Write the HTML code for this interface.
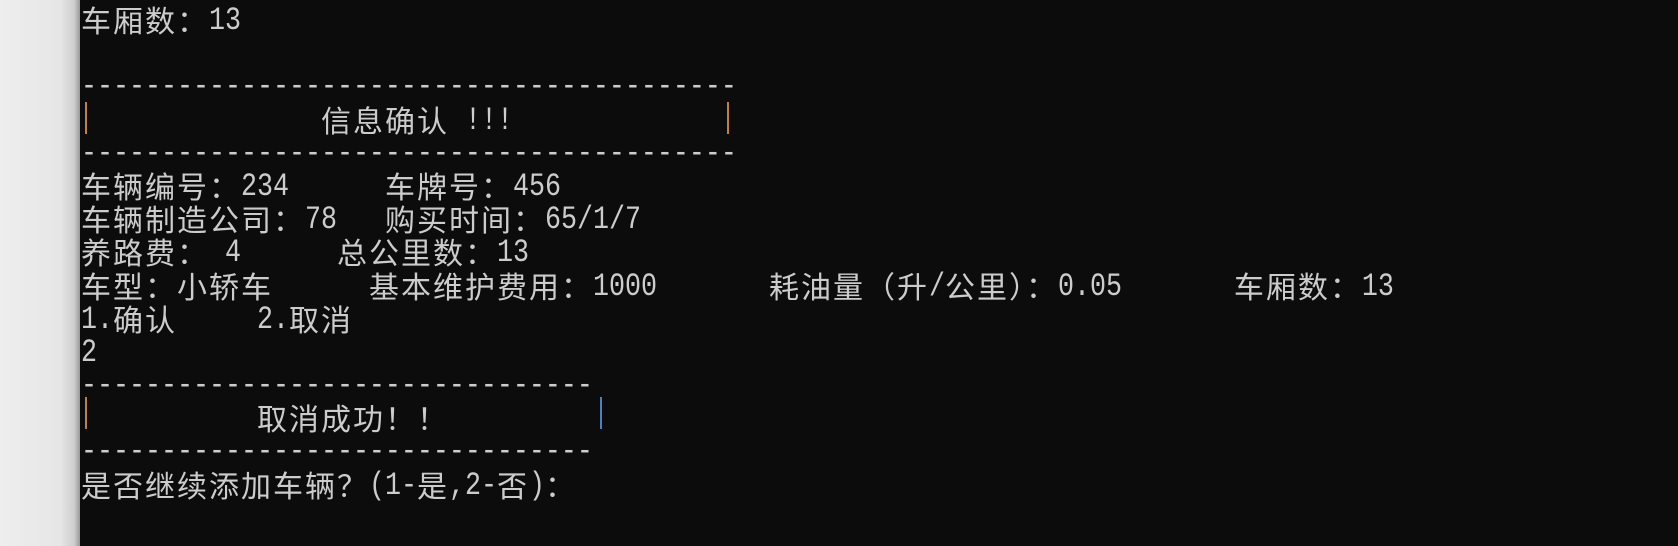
<!DOCTYPE html>
<html><head><meta charset="utf-8"><style>
html,body{margin:0;padding:0}
body{width:1678px;height:546px;background:#0c0c0c;position:relative;overflow:hidden}
#strip{position:absolute;left:0;top:0;width:80px;height:546px;background:linear-gradient(to right,#eeeeee 0,#e6e6e6 60px,#cfcfcf 74px,#9a9a9a 80px)}
#t{position:absolute;left:81px;top:3px;color:#cccccc;}
.l{height:33.2px;white-space:pre;overflow:visible;font-size:0;line-height:33.2px}
.l span{display:inline-block;vertical-align:top;height:33.2px;line-height:33.2px}
.c{font-family:"Noto Sans CJK SC","WenQuanYi Zen Hei",sans-serif;font-size:30px !important;width:auto;letter-spacing:2px}
.a{font-family:"Liberation Mono",monospace;font-size:26.67px;transform:translateY(3px) scaleY(1.22);transform-origin:50% 55%}
.bar{position:absolute;width:1.5px}
</style></head><body>
<div id="strip"></div>
<div id="t"><div class="l"><span class="c">车厢数：</span><span class="a">13</span></div><div class="l"><span class="a"> </span></div><div class="l"><span class="a">-----------------------------------------</span></div><div class="l"><span class="a">               </span><span class="c">信息确认</span><span class="a"> !!!</span></div><div class="l"><span class="a">-----------------------------------------</span></div><div class="l"><span class="c">车辆编号：</span><span class="a">234      </span><span class="c">车牌号：</span><span class="a">456</span></div><div class="l"><span class="c">车辆制造公司：</span><span class="a">78   </span><span class="c">购买时间：</span><span class="a">65/1/7</span></div><div class="l"><span class="c">养路费：</span><span class="a"> 4      </span><span class="c">总公里数：</span><span class="a">13</span></div><div class="l"><span class="c">车型：小轿车</span><span class="a">      </span><span class="c">基本维护费用：</span><span class="a">1000       </span><span class="c">耗油量（升</span><span class="a">/</span><span class="c">公里）：</span><span class="a">0.05       </span><span class="c">车厢数：</span><span class="a">13</span></div><div class="l"><span class="a">1.</span><span class="c">确认</span><span class="a">     2.</span><span class="c">取消</span></div><div class="l"><span class="a">2</span></div><div class="l"><span class="a">--------------------------------</span></div><div class="l"><span class="a">           </span><span class="c">取消成功！！</span></div><div class="l"><span class="a">--------------------------------</span></div><div class="l"><span class="c">是否继续添加车辆？</span><span class="a">(1-</span><span class="c">是</span><span class="a">,2-</span><span class="c">否</span><span class="a">)</span><span class="c">：</span></div></div>
<div class="bar" style="left:85px;top:102px;height:32px;background:#c08040"></div>
<div class="bar" style="left:727px;top:102px;height:32px;background:#c08040"></div>
<div class="bar" style="left:85px;top:397px;height:32px;background:#c08040"></div>
<div class="bar" style="left:600px;top:397px;height:32px;background:#4a7fc0"></div>
</body></html>
